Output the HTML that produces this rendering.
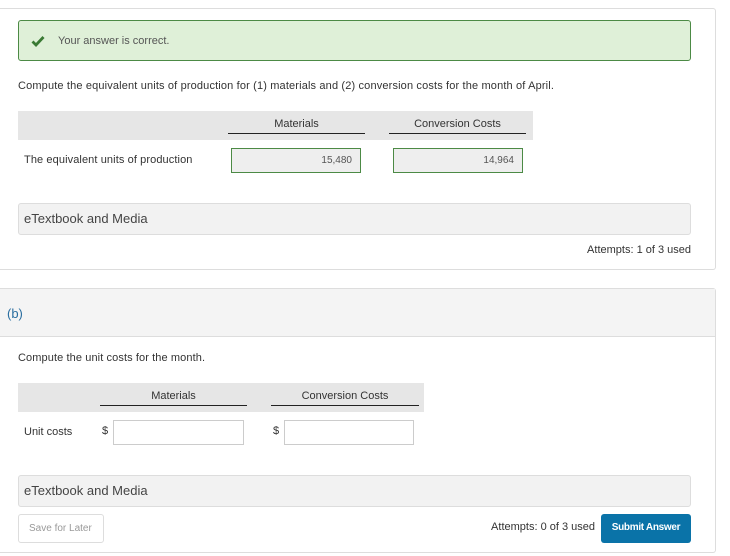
<!DOCTYPE html>
<html><head><style>
*{margin:0;padding:0;box-sizing:border-box}
body{width:730px;height:556px;background:#fff;position:relative;overflow:hidden;font-family:"Liberation Sans",sans-serif;color:#333;font-size:11px;letter-spacing:0}
.a{position:absolute}
.panel{position:absolute;left:0;width:716px;border:1px solid #ddd;border-left:none;border-radius:0 3px 3px 0;background:#fff}
.box{position:absolute;background:#f2f2f2;border:1px solid #ddd;border-radius:3px}
.hdr{position:absolute;background:#e6e6e6}
.ul{position:absolute;border-bottom:1.5px solid #222;text-align:center;font-size:11px;color:#333}
.inp{position:absolute;border:1px solid #ccc;background:#fff}
</style></head><body>
<div class="panel" style="top:8px;height:262px"></div>
<div class="a" style="left:18px;top:20px;width:673px;height:41px;background:#dff0d8;border:1px solid #4c8a45;border-radius:3px"></div>
<svg class="a" style="left:31px;top:35px" width="14" height="12" viewBox="0 0 14 12"><path d="M1.5 6.5 L5 10 L12.5 2" stroke="#3a7a34" stroke-width="2.8" fill="none"/></svg>
<div class="a" style="left:58px;top:35px;font-size:11px;color:#555">Your answer is correct.</div>
<div class="a" style="left:18px;top:80px;font-size:11px;letter-spacing:0.15px">Compute the equivalent units of production for (1) materials and (2) conversion costs for the month of April.</div>
<div class="hdr" style="left:18px;top:111px;width:515px;height:29px"></div>
<div class="ul" style="left:228px;top:118px;width:137px;height:16px">Materials</div>
<div class="ul" style="left:389px;top:118px;width:137px;height:16px">Conversion Costs</div>
<div class="a" style="left:24px;top:154px;letter-spacing:0.1px">The equivalent units of production</div>
<div class="a" style="left:231px;top:148px;width:130px;height:25px;background:#eee;border:1px solid #4c8a45;text-align:right;padding:6px 8px;font-size:10px;color:#555">15,480</div>
<div class="a" style="left:393px;top:148px;width:130px;height:25px;background:#eee;border:1px solid #4c8a45;text-align:right;padding:6px 8px;font-size:10px;color:#555">14,964</div>
<div class="box" style="left:18px;top:203px;width:673px;height:32px"></div>
<div class="a" style="left:24px;top:211px;font-size:13px;color:#444">eTextbook and Media</div>
<div class="a" style="right:39px;top:244px;font-size:11px;color:#333">Attempts: 1 of 3 used</div>

<div class="panel" style="top:288px;height:265px"></div>
<div class="a" style="left:0;top:289px;width:715px;height:48px;background:#f4f4f4;border-bottom:1px solid #ddd"></div>
<div class="a" style="left:7px;top:306px;font-size:13px;color:#2a6ea0">(b)</div>
<div class="a" style="left:18px;top:352px;letter-spacing:0.1px">Compute the unit costs for the month.</div>
<div class="hdr" style="left:18px;top:383px;width:406px;height:29px"></div>
<div class="ul" style="left:100px;top:390px;width:147px;height:16px">Materials</div>
<div class="ul" style="left:271px;top:390px;width:148px;height:16px">Conversion Costs</div>
<div class="a" style="left:24px;top:426px">Unit costs</div>
<div class="a" style="left:102px;top:425px">$</div>
<div class="inp" style="left:113px;top:420px;width:131px;height:25px"></div>
<div class="a" style="left:273px;top:425px">$</div>
<div class="inp" style="left:284px;top:420px;width:130px;height:25px"></div>
<div class="box" style="left:18px;top:475px;width:673px;height:32px"></div>
<div class="a" style="left:24px;top:483px;font-size:13px;color:#444">eTextbook and Media</div>
<div class="a" style="left:18px;top:514px;width:86px;height:29px;border:1px solid #ddd;border-radius:3px;font-size:10px;color:#999;padding:8px 0 0 10px">Save for Later</div>
<div class="a" style="right:135px;top:521px;font-size:11px;color:#333">Attempts: 0 of 3 used</div>
<div class="a" style="left:601px;top:514px;width:90px;height:29px;background:#0a73a8;border-radius:3px;color:#fff;font-size:10px;font-weight:bold;text-align:center;padding-top:8px;letter-spacing:-0.3px">Submit Answer</div>
</body></html>
